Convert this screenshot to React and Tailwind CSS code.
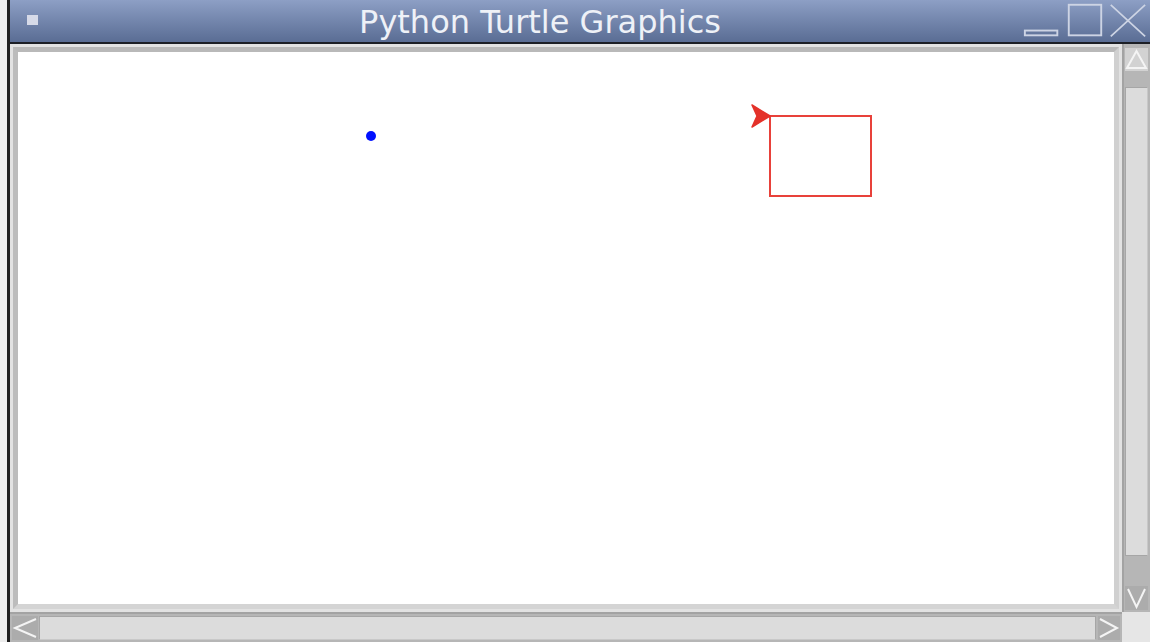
import React from "react";

const font = { fontFamily: '"DejaVu Sans", "Liberation Sans", sans-serif' };

function ArrowBox({ dir, className, w, h }) {
  const paths = {
    up: `M2,${h - 3} L${w / 2},3 L${w - 2},${h - 3} Z`,
    down: `M3,3 L${w / 2},${h - 3} L${w - 3},3`,
    left: `M${w - 2},3 L3,${h / 2} L${w - 2},${h - 3}`,
    right: `M2,3 L${w - 3},${h / 2} L2,${h - 3}`,
  };
  return (
    <div className={className}>
      <svg width={w} height={h} className="block">
        <path d={paths[dir]} fill="none" stroke="#f4f4f4" strokeWidth="2" />
      </svg>
    </div>
  );
}

function TitleBar() {
  return (
    <div className="relative h-[44px] flex items-center justify-center bg-gradient-to-b from-[#8d9fc5] to-[#5a6d94] border-b-2 border-[#1c1f26] shrink-0">
      <div className="absolute left-[17px] top-[15px] w-[11px] h-[10px] bg-[#d6dae8]" />
      <span className="text-[32px] leading-none text-[#eef1f7] -ml-[80px] mt-[1px]" style={font}>
        Python Turtle Graphics
      </span>
      {/* window buttons */}
      <div className="absolute right-0 top-0 h-full w-[130px]">
        <svg viewBox="0 0 130 44" className="w-full h-full">
          <rect x="2" y="32" width="34" height="5" fill="none" stroke="#cdd4e4" strokeWidth="2" />
          <rect x="48" y="5" width="34" height="32" fill="none" stroke="#cdd4e4" strokeWidth="2" />
          <path d="M92,5 L128,38 M128,5 L92,38" stroke="#cdd4e4" strokeWidth="1.8" />
        </svg>
      </div>
    </div>
  );
}

function Canvas() {
  return (
    <div className="flex-1 p-[3px] bg-[#e2e2e2] flex">
      <div className="flex-1 border-[5px] border-t-[#b9b9b9] border-l-[#bcbcbc] border-r-[#d0d0d0] border-b-[#d4d4d4] bg-white relative">
        {/* drawing surface: canvas starts at page (18,53) */}
        <svg className="absolute inset-0 w-full h-full">
          <circle cx="353" cy="84" r="5" fill="#0010ff" />
          <rect x="752" y="64" width="101" height="80" fill="none" stroke="#e8413a" strokeWidth="2" />
          <path d="M752,64 L734,53 L739,64 L734,75 Z" fill="#e4322a" stroke="#e4322a" strokeWidth="1.5" strokeLinejoin="round" />
        </svg>
      </div>
    </div>
  );
}

function VScroll() {
  return (
    <div className="w-[28px] flex flex-col border-l-2 border-[#a3a3a3] bg-[#b6b6b6] pt-[4px] pb-[2px] pl-[1px] pr-[2px]">
      <ArrowBox dir="up" w={23} h={23} className="h-[23px] bg-[#d2d2d2]" />
      <div className="h-[16px]" />
      <div className="h-[469px] bg-[#dcdcdc] border border-[#a6a6a6] border-r-[#c8c8c8]" />
      <div className="flex-1" />
      <ArrowBox dir="down" w={23} h={24} className="h-[24px] bg-[#acacac]" />
    </div>
  );
}

function HScroll() {
  return (
    <div className="h-[30px] flex shrink-0">
      <div className="w-[1112px] flex border-t-2 border-[#a3a3a3] bg-[#b6b6b6] pt-[2px] pb-[2px] pl-[2px]">
        <ArrowBox dir="left" w={26} h={24} className="w-[26px] bg-[#acacac]" />
        <div className="w-[1057px] bg-[#dcdcdc] border border-[#a6a6a6] border-b-[#c8c8c8] ml-[1px]" />
        <div className="w-[2px]" />
        <ArrowBox dir="right" w={22} h={24} className="w-[22px] bg-[#acacac]" />
      </div>
      <div className="flex-1 bg-[#e6e6e6]" />
    </div>
  );
}

export default function App() {
  return (
    <div className="w-[1150px] h-[642px] flex bg-[#ebebeb] overflow-hidden">
      <div className="w-[7px] bg-[#ececec]" />
      <div className="w-[3px] bg-[#1e1e1e]" />
      <div className="flex-1 flex flex-col">
        <TitleBar />
        <div className="flex-1 flex bg-[#dadada]">
          <Canvas />
          <VScroll />
        </div>
        <HScroll />
      </div>
    </div>
  );
}
